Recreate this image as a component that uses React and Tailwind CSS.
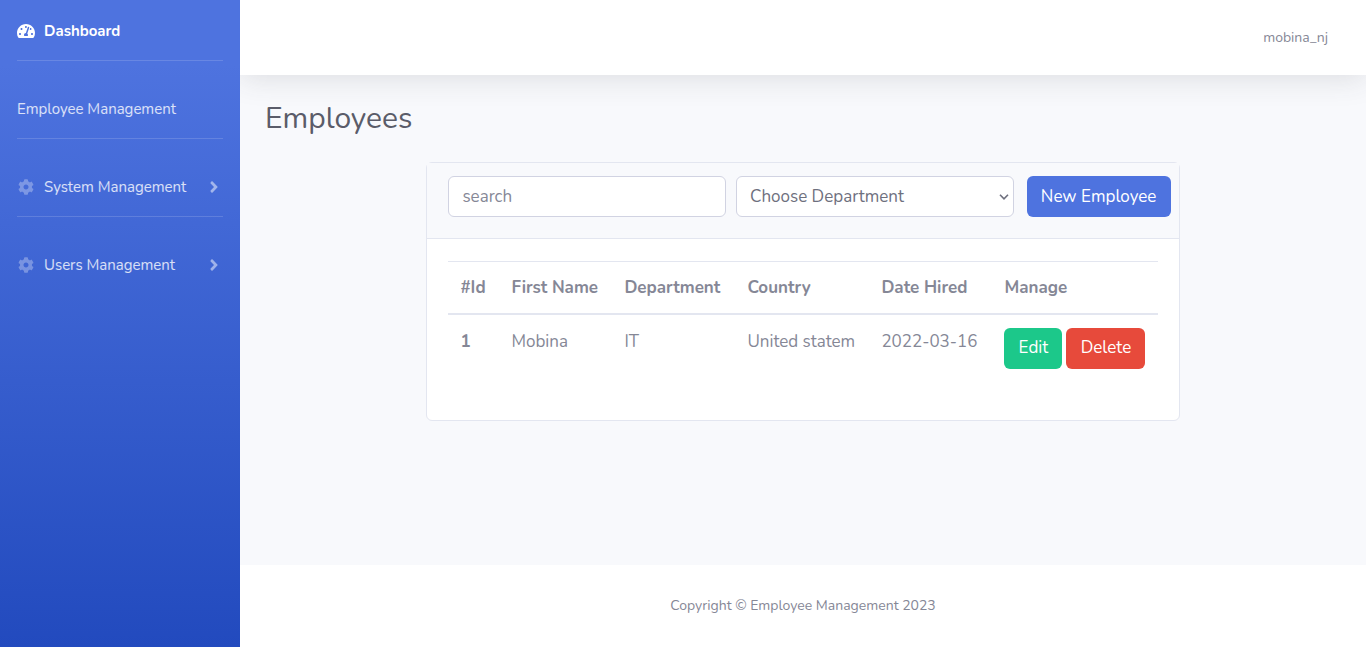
import { FaTachometerAlt, FaCog, FaAngleRight } from "react-icons/fa";

const menus = ["System Management", "Users Management"];

const employees = [
  { id: 1, name: "Mobina", department: "IT", country: "United statem", hired: "2022-03-16" },
];

function Divider() {
  return <hr className="mx-[17px] border-0 border-t border-white/15" />;
}

function Sidebar() {
  return (
    <nav className="flex w-60 shrink-0 flex-col bg-linear-to-b from-[#4e73df] from-10% to-[#224abe] text-[15px] text-white/80">
      <a href="#dashboard" className="flex h-[60px] items-center gap-[9px] px-[17px] pt-0.5 font-bold text-white">
        <FaTachometerAlt className="size-[18px]" />
        Dashboard
      </a>
      <Divider />
      <a href="#employees" className="mt-[17px] flex h-[60px] items-center px-[17px] pt-0.5">
        Employee Management
      </a>
      <Divider />
      {menus.map((label, i) => (
        <div key={label}>
          {i > 0 && <Divider />}
          <button type="button" className="mt-[17px] flex h-[60px] w-full items-center gap-[9px] px-[17px] pt-0.5 text-left">
            <FaCog className="mx-px size-4 text-white/30" />
            <span className="flex-1">{label}</span>
            <FaAngleRight className="size-[18px] text-white/50" />
          </button>
        </div>
      ))}
    </nav>
  );
}

function Toolbar() {
  const field = "h-[41px] w-full rounded-md border border-[#d1d3e2] bg-white px-[13px]";
  return (
    <div className="flex border-b border-[#e3e6f0] bg-[#f8f9fc] pt-[13px] pr-2 pb-[21px] pl-[21px]">
      <div className="mr-[10px] min-w-0 flex-1">
        <input aria-label="Search employees" placeholder="search" className={`${field} placeholder:text-[#858796]`} />
      </div>
      <div className="relative mr-[13px] min-w-0 flex-1">
        <select aria-label="Department" className={`${field} appearance-none text-[#6e707e]`}>
          <option>Choose Department</option>
        </select>
        <svg viewBox="0 0 10 6" className="pointer-events-none absolute top-[18px] right-[5px] h-[6px] w-[10px]" fill="none" stroke="#6e707e" strokeWidth="1.6">
          <path d="M1 .7 5 4.8 9 .7" />
        </svg>
      </div>
      <button type="button" className="h-[41px] w-36 shrink-0 rounded-md bg-[#4e73df] text-white">
        New Employee
      </button>
    </div>
  );
}

function EmployeeTable() {
  return (
    <table className="w-full table-fixed text-left">
      <colgroup>
        <col className="w-[51px]" />
        <col className="w-[113px]" />
        <col className="w-[123px]" />
        <col className="w-[134px]" />
        <col className="w-[123px]" />
        <col />
      </colgroup>
      <thead>
        <tr className="h-[52px] border-t border-b-2 border-[#e3e6f0]">
          {["#Id", "First Name", "Department", "Country", "Date Hired", "Manage"].map((h) => (
            <th key={h} className="pl-3 font-bold">{h}</th>
          ))}
        </tr>
      </thead>
      <tbody>
        {employees.map((e) => (
          <tr key={e.id} className="align-top leading-7">
            <th className="py-[13px] pl-3 font-bold">{e.id}</th>
            <td className="py-[13px] pl-3">{e.name}</td>
            <td className="py-[13px] pl-3">{e.department}</td>
            <td className="py-[13px] pl-3">{e.country}</td>
            <td className="py-[13px] pl-3">{e.hired}</td>
            <td className="py-[13px] pl-3">
              <div className="flex gap-1">
                <button type="button" className="h-[41px] w-[58px] rounded-md bg-[#1cc88a] text-white">Edit</button>
                <button type="button" className="h-[41px] w-[79px] rounded-md bg-[#e74a3b] text-white">Delete</button>
              </div>
            </td>
          </tr>
        ))}
      </tbody>
    </table>
  );
}

export default function App() {
  return (
    <div className="flex min-h-screen bg-[#f8f9fc] font-[Nunito,Lato,sans-serif] text-[17px] text-[#858796]">
      <Sidebar />
      <div className="flex min-w-0 flex-1 flex-col overflow-hidden">
        <header className="flex h-[75px] items-center justify-end bg-white px-[38px] text-sm shadow-[0_3px_30px_0_rgba(58,59,69,0.15)]">
          <a href="#profile">mobina_nj</a>
        </header>
        <main className="flex-1 px-[25px] pt-[26px]">
          <h1 className="text-[30px] leading-9 text-[#5a5c69]">Employees</h1>
          <section className="mx-auto mt-[25px] w-[70%] rounded-md border border-[#e3e6f0] bg-white">
            <Toolbar />
            <div className="px-[21px] pt-[22px] pb-[38px]">
              <EmployeeTable />
            </div>
          </section>
        </main>
        <footer className="flex h-[82px] items-center justify-center bg-white text-sm">
          Copyright © Employee Management 2023
        </footer>
      </div>
    </div>
  );
}
